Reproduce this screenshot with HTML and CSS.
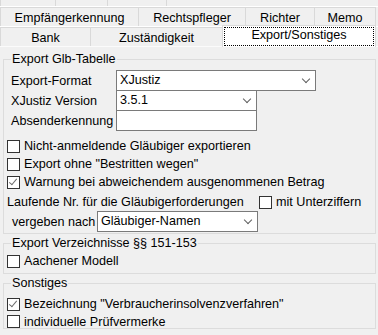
FILE: index.html
```html
<!DOCTYPE html>
<html lang="de">
<head>
  <meta charset="UTF-8">
  <title>Export/Sonstiges</title>
  <link rel="stylesheet" href="styles.css">
</head>
<body>
  <div class="tabs">
    <div class="tab-row row-back">
      <div class="tab tab-a"></div>
      <div class="tab tab-b"></div>
      <div class="tab tab-c"></div>
    </div>
    <div class="tab-row row-mid">
      <div class="tab tab-empf">Empfängerkennung</div>
      <div class="tab tab-rpfl">Rechtspfleger</div>
      <div class="tab tab-richter">Richter</div>
      <div class="tab tab-memo">Memo</div>
    </div>
    <div class="tab-row row-front">
      <div class="tab tab-bank">Bank</div>
      <div class="tab tab-zust">Zuständigkeit</div>
      <div class="tab tab-export active"><span class="focus">Export/Sonstiges</span></div>
    </div>
  </div>

  <div class="page">
    <fieldset class="group group-glb">
      <legend>Export Glb-Tabelle</legend>
      <div class="field">
        <span class="label">Export-Format</span>
        <div class="combo combo-format">XJustiz<span class="chevron"></span></div>
      </div>
      <div class="field stacked">
        <span class="label">XJustiz Version</span>
        <div class="combo combo-short">3.5.1<span class="chevron"></span></div>
      </div>
      <div class="field stacked">
        <span class="label">Absenderkennung</span>
        <div class="edit combo-short"></div>
      </div>

      <div class="checks">
        <label class="check"><span class="box"></span>Nicht-anmeldende Gläubiger exportieren</label>
        <label class="check"><span class="box"></span>Export ohne "Bestritten wegen"</label>
        <label class="check"><span class="box checked"></span>Warnung bei abweichendem ausgenommenen Betrag</label>
      </div>

      <div class="numbering">
        <span class="numbering-text">Laufende Nr. für die Gläubigerforderungen</span>
        <label class="check"><span class="box"></span>mit Unterziffern</label>
      </div>
      <div class="field by">
        <span class="label">vergeben nach</span>
        <div class="combo combo-by">Gläubiger-Namen<span class="chevron"></span></div>
      </div>
    </fieldset>

    <fieldset class="group group-verz">
      <legend>Export Verzeichnisse §§ 151-153</legend>
      <label class="check"><span class="box"></span>Aachener Modell</label>
    </fieldset>

    <fieldset class="group group-misc">
      <legend>Sonstiges</legend>
      <label class="check"><span class="box checked"></span>Bezeichnung "Verbraucherinsolvenzverfahren"</label>
      <label class="check"><span class="box"></span>individuelle Prüfvermerke</label>
    </fieldset>
  </div>
</body>
</html>
```

FILE: styles.css
```css
body {
  margin: 0;
  width: 378px;
  height: 335px;
  overflow: hidden;
  background-color: #f0f0f0;
  font-family: "Liberation Sans", Arial, sans-serif;
  font-size: 12.6px;
  color: #000;
  white-space: nowrap;
}
.tabs {
  display: flex;
  flex-direction: column;
}
.tab-row {
  display: flex;
  border-bottom: 1px solid #fff;
}
.tab {
  box-sizing: border-box;
  background-color: #f0f0f0;
  border: 1px solid #d9d9d9;
  border-bottom: none;
  margin-right: -1px;
  text-align: center;
  line-height: 18px;
}
.row-back {
  height: 6px;
  overflow: hidden;
}
.row-back .tab {
  height: 6px;
  border-top: none;
}
.tab-a { width: 56px; }
.tab-b { width: 53px; }
.tab-c { width: 60px; }
.row-mid .tab,
.row-front .tab {
  height: 19px;
  padding-top: 1px;
}
.tab-empf { width: 139px; }
.tab-rpfl { width: 108px; }
.tab-richter { width: 70px; }
.tab-memo { width: 62px; }
.tab-bank { width: 91px; }
.tab-zust { width: 133px; }
.row-front {
  border-bottom: none;
  position: relative;
  z-index: 1;
}
.tab.active {
  width: 154px;
  height: 22px;
  margin-top: -2px;
  margin-bottom: -1px;
  padding: 1px 1px 0;
  background-color: #fff;
}
.focus {
  display: block;
  height: 17px;
  line-height: 15px;
  border: 1px dotted #000;
}

.page {
  display: flex;
  flex-direction: column;
  gap: 2px;
  padding: 5px 2px 0 3px;
  border-top: 1px solid #fbfbfb;
}
.group {
  margin: 0;
  padding: 0 3px 1px 3px;
  border: 1px solid #dcdcdc;
  min-width: 0;
}
.group legend {
  margin-left: 4px;
  padding: 0 1px;
  line-height: 15px;
}
.field {
  display: flex;
  align-items: center;
  margin-top: 3px;
}
.field.stacked {
  margin-top: -1px;
}
.label {
  flex: 0 0 109px;
  padding-left: 4px;
  box-sizing: border-box;
}
.combo,
.edit {
  position: relative;
  box-sizing: border-box;
  height: 21px;
  line-height: 19px;
  padding-left: 3px;
  background-color: #fff;
  border: 1px solid #7a7a7a;
}
.combo-format { width: 200px; }
.combo-short { width: 141px; }
.combo-by { width: 161px; }
.chevron {
  position: absolute;
  right: 6px;
  top: 5px;
  width: 5px;
  height: 5px;
  border-right: 1px solid #606060;
  border-bottom: 1px solid #606060;
  transform: rotate(45deg);
}
.checks {
  display: flex;
  flex-direction: column;
  margin-top: 6px;
}
.check {
  display: flex;
  align-items: center;
  gap: 4px;
  height: 18px;
}
.box {
  position: relative;
  flex: 0 0 13px;
  box-sizing: border-box;
  width: 13px;
  height: 13px;
  border: 1px solid #333;
  background-color: #fff;
}
.box.checked::after {
  content: "";
  position: absolute;
  left: 3px;
  top: 0px;
  width: 3px;
  height: 7px;
  border-right: 1.5px solid #6d6d6d;
  border-bottom: 1.5px solid #6d6d6d;
  transform: rotate(40deg);
}
.numbering {
  display: flex;
  align-items: center;
  height: 18px;
  margin-top: 2px;
}
.numbering-text {
  flex: 0 0 252px;
}
.field.by {
  margin-top: 0;
}
.field.by .label {
  flex-basis: 90px;
  padding-left: 5px;
}
.group-verz .check {
  margin: 1px 0 2px;
}
.group-misc {
  padding-bottom: 0;
}
.group-misc .check:first-of-type {
  margin-top: 4px;
}
.group-misc .check:last-of-type {
  height: 15px;
  align-items: flex-start;
  padding-top: 2px;
  box-sizing: border-box;
}
```
